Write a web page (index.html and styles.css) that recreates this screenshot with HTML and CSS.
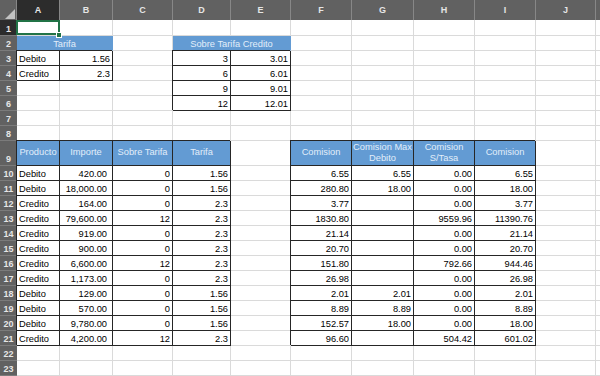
FILE: index.html
```html
<!DOCTYPE html>
<html lang="es">
<head>
    <meta charset="UTF-8">
    <meta name="viewport" content="width=device-width, initial-scale=1.0">
    <title>Comisiones</title>
    <link rel="stylesheet" href="styles.css">
</head>
<body>
    <div class="sheet">
        <!-- Column headers -->
        <div class="corner"></div>
        <div class="ch sel">A</div>
        <div class="ch">B</div>
        <div class="ch">C</div>
        <div class="ch">D</div>
        <div class="ch">E</div>
        <div class="ch">F</div>
        <div class="ch">G</div>
        <div class="ch">H</div>
        <div class="ch">I</div>
        <div class="ch">J</div>
        <div class="ch"></div>

        <!-- Row 1 -->
        <div class="rh sel">1</div>
        <div class="c active"></div>
        <div class="c"></div><div class="c"></div><div class="c"></div><div class="c"></div><div class="c"></div>
        <div class="c"></div><div class="c"></div><div class="c"></div><div class="c"></div><div class="c"></div>

        <!-- Row 2 -->
        <div class="rh">2</div>
        <div class="c band">Tarifa</div>
        <div class="c"></div>
        <div class="c band">Sobre Tarifa Credito</div>
        <div class="c"></div><div class="c"></div><div class="c"></div><div class="c"></div><div class="c"></div><div class="c"></div>

        <!-- Row 3 -->
        <div class="rh">3</div>
        <div class="c t">Debito</div>
        <div class="c t r">1.56</div>
        <div class="c"></div>
        <div class="c t r">3</div>
        <div class="c t r">3.01</div>
        <div class="c"></div><div class="c"></div><div class="c"></div><div class="c"></div><div class="c"></div><div class="c"></div>

        <!-- Row 4 -->
        <div class="rh">4</div>
        <div class="c t">Credito</div>
        <div class="c t r">2.3</div>
        <div class="c"></div>
        <div class="c t r">6</div>
        <div class="c t r">6.01</div>
        <div class="c"></div><div class="c"></div><div class="c"></div><div class="c"></div><div class="c"></div><div class="c"></div>

        <!-- Row 5 -->
        <div class="rh">5</div>
        <div class="c"></div><div class="c"></div><div class="c"></div>
        <div class="c t r">9</div>
        <div class="c t r">9.01</div>
        <div class="c"></div><div class="c"></div><div class="c"></div><div class="c"></div><div class="c"></div><div class="c"></div>

        <!-- Row 6 -->
        <div class="rh">6</div>
        <div class="c"></div><div class="c"></div><div class="c"></div>
        <div class="c t r">12</div>
        <div class="c t r">12.01</div>
        <div class="c"></div><div class="c"></div><div class="c"></div><div class="c"></div><div class="c"></div><div class="c"></div>

        <!-- Row 7 -->
        <div class="rh">7</div>
        <div class="c"></div><div class="c"></div><div class="c"></div><div class="c"></div><div class="c"></div>
        <div class="c"></div><div class="c"></div><div class="c"></div><div class="c"></div><div class="c"></div><div class="c"></div>

        <!-- Row 8 -->
        <div class="rh">8</div>
        <div class="c"></div><div class="c"></div><div class="c"></div><div class="c"></div><div class="c"></div>
        <div class="c"></div><div class="c"></div><div class="c"></div><div class="c"></div><div class="c"></div><div class="c"></div>

        <!-- Row 9: table headers -->
        <div class="rh">9</div>
        <div class="c t hd">Producto</div>
        <div class="c t hd">Importe</div>
        <div class="c t hd">Sobre Tarifa</div>
        <div class="c t hd">Tarifa</div>
        <div class="c"></div>
        <div class="c t hd">Comision</div>
        <div class="c t hd">Comision Max<br>Debito</div>
        <div class="c t hd">Comision<br>S/Tasa</div>
        <div class="c t hd">Comision</div>
        <div class="c"></div><div class="c"></div>

        <!-- Row 10 -->
        <div class="rh">10</div>
        <div class="c t">Debito</div><div class="c t r pad">420.00</div><div class="c t r">0</div><div class="c t r">1.56</div>
        <div class="c"></div>
        <div class="c t r">6.55</div><div class="c t r">6.55</div><div class="c t r">0.00</div><div class="c t r">6.55</div>
        <div class="c"></div><div class="c"></div>

        <!-- Row 11 -->
        <div class="rh">11</div>
        <div class="c t">Debito</div><div class="c t r pad">18,000.00</div><div class="c t r">0</div><div class="c t r">1.56</div>
        <div class="c"></div>
        <div class="c t r">280.80</div><div class="c t r">18.00</div><div class="c t r">0.00</div><div class="c t r">18.00</div>
        <div class="c"></div><div class="c"></div>

        <!-- Row 12 -->
        <div class="rh">12</div>
        <div class="c t">Credito</div><div class="c t r pad">164.00</div><div class="c t r">0</div><div class="c t r">2.3</div>
        <div class="c"></div>
        <div class="c t r">3.77</div><div class="c t r"></div><div class="c t r">0.00</div><div class="c t r">3.77</div>
        <div class="c"></div><div class="c"></div>

        <!-- Row 13 -->
        <div class="rh">13</div>
        <div class="c t">Credito</div><div class="c t r pad">79,600.00</div><div class="c t r">12</div><div class="c t r">2.3</div>
        <div class="c"></div>
        <div class="c t r">1830.80</div><div class="c t r"></div><div class="c t r">9559.96</div><div class="c t r">11390.76</div>
        <div class="c"></div><div class="c"></div>

        <!-- Row 14 -->
        <div class="rh">14</div>
        <div class="c t">Credito</div><div class="c t r pad">919.00</div><div class="c t r">0</div><div class="c t r">2.3</div>
        <div class="c"></div>
        <div class="c t r">21.14</div><div class="c t r"></div><div class="c t r">0.00</div><div class="c t r">21.14</div>
        <div class="c"></div><div class="c"></div>

        <!-- Row 15 -->
        <div class="rh">15</div>
        <div class="c t">Credito</div><div class="c t r pad">900.00</div><div class="c t r">0</div><div class="c t r">2.3</div>
        <div class="c"></div>
        <div class="c t r">20.70</div><div class="c t r"></div><div class="c t r">0.00</div><div class="c t r">20.70</div>
        <div class="c"></div><div class="c"></div>

        <!-- Row 16 -->
        <div class="rh">16</div>
        <div class="c t">Credito</div><div class="c t r pad">6,600.00</div><div class="c t r">12</div><div class="c t r">2.3</div>
        <div class="c"></div>
        <div class="c t r">151.80</div><div class="c t r"></div><div class="c t r">792.66</div><div class="c t r">944.46</div>
        <div class="c"></div><div class="c"></div>

        <!-- Row 17 -->
        <div class="rh">17</div>
        <div class="c t">Credito</div><div class="c t r pad">1,173.00</div><div class="c t r">0</div><div class="c t r">2.3</div>
        <div class="c"></div>
        <div class="c t r">26.98</div><div class="c t r"></div><div class="c t r">0.00</div><div class="c t r">26.98</div>
        <div class="c"></div><div class="c"></div>

        <!-- Row 18 -->
        <div class="rh">18</div>
        <div class="c t">Debito</div><div class="c t r pad">129.00</div><div class="c t r">0</div><div class="c t r">1.56</div>
        <div class="c"></div>
        <div class="c t r">2.01</div><div class="c t r">2.01</div><div class="c t r">0.00</div><div class="c t r">2.01</div>
        <div class="c"></div><div class="c"></div>

        <!-- Row 19 -->
        <div class="rh">19</div>
        <div class="c t">Debito</div><div class="c t r pad">570.00</div><div class="c t r">0</div><div class="c t r">1.56</div>
        <div class="c"></div>
        <div class="c t r">8.89</div><div class="c t r">8.89</div><div class="c t r">0.00</div><div class="c t r">8.89</div>
        <div class="c"></div><div class="c"></div>

        <!-- Row 20 -->
        <div class="rh">20</div>
        <div class="c t">Debito</div><div class="c t r pad">9,780.00</div><div class="c t r">0</div><div class="c t r">1.56</div>
        <div class="c"></div>
        <div class="c t r">152.57</div><div class="c t r">18.00</div><div class="c t r">0.00</div><div class="c t r">18.00</div>
        <div class="c"></div><div class="c"></div>

        <!-- Row 21 -->
        <div class="rh">21</div>
        <div class="c t">Credito</div><div class="c t r pad">4,200.00</div><div class="c t r">12</div><div class="c t r">2.3</div>
        <div class="c"></div>
        <div class="c t r">96.60</div><div class="c t r"></div><div class="c t r">504.42</div><div class="c t r">601.02</div>
        <div class="c"></div><div class="c"></div>

        <!-- Row 22 -->
        <div class="rh">22</div>
        <div class="c"></div><div class="c"></div><div class="c"></div><div class="c"></div><div class="c"></div>
        <div class="c"></div><div class="c"></div><div class="c"></div><div class="c"></div><div class="c"></div><div class="c"></div>

        <!-- Row 23 -->
        <div class="rh">23</div>
        <div class="c"></div><div class="c"></div><div class="c"></div><div class="c"></div><div class="c"></div>
        <div class="c"></div><div class="c"></div><div class="c"></div><div class="c"></div><div class="c"></div><div class="c"></div>
    </div>
</body>
</html>
```

FILE: styles.css
```css
body {
    margin: 0;
    background-color: white;
    font-family: "Liberation Sans", Arial, sans-serif;
    overflow: hidden;
}
.sheet {
    display: grid;
    grid-template-columns: 17px 43px 53px 60px 58px 60px 61px 62px 61px 61px 60px 1fr;
    grid-template-rows: 20px 16px repeat(7, 15px) 25px repeat(14, 15px);
    font-size: 9.3px;
    color: #000;
}
.corner {
    background-color: #616161;
    border-right: 1px solid #878787;
    display: flex;
    align-items: flex-end;
    justify-content: flex-end;
    padding: 0 1px 1px 0;
}
.corner::after {
    content: "";
    border-left: 10px solid transparent;
    border-bottom: 10px solid #c2c2c2;
}
.ch {
    background-color: #616161;
    color: #e6e6e6;
    font-size: 9px;
    font-weight: bold;
    border-right: 1px solid #878787;
    display: flex;
    align-items: center;
    justify-content: center;
}
.rh {
    background-color: #616161;
    color: #e6e6e6;
    font-size: 9px;
    font-weight: bold;
    border-bottom: 1px solid #7b7b7b;
    display: flex;
    align-items: flex-end;
    justify-content: center;
    padding-bottom: 1px;
}
.ch.sel,
.rh.sel {
    background-color: #2c2c2c;
}
.c {
    border-right: 1px solid #dadada;
    border-bottom: 1px solid #dadada;
    padding: 1px 2px 0;
    line-height: 14px;
    white-space: nowrap;
    overflow: hidden;
}
.r {
    text-align: right;
}
.pad {
    padding-right: 5px;
}
.t {
    border-right-color: #262626;
    border-bottom-color: #262626;
    box-shadow: -1px -1px 0 #262626;
}
.band {
    grid-column: span 2;
    background-color: #639bd3;
    border-right-color: #639bd3;
    color: #e2eefa;
    text-align: center;
}
.hd {
    background-color: #639bd3;
    color: #e2eefa;
    display: flex;
    align-items: center;
    justify-content: center;
    text-align: center;
    line-height: 11.5px;
    padding: 0;
}
.active {
    position: relative;
    overflow: visible;
    z-index: 1;
}
.active::after {
    content: "";
    position: absolute;
    left: -1px;
    top: 0;
    right: -1px;
    bottom: 0;
    border: 2px solid #217346;
}
.active::before {
    content: "";
    position: absolute;
    right: -3px;
    bottom: -3px;
    width: 4px;
    height: 4px;
    background-color: #217346;
    border: 1px solid white;
    z-index: 2;
}
```
